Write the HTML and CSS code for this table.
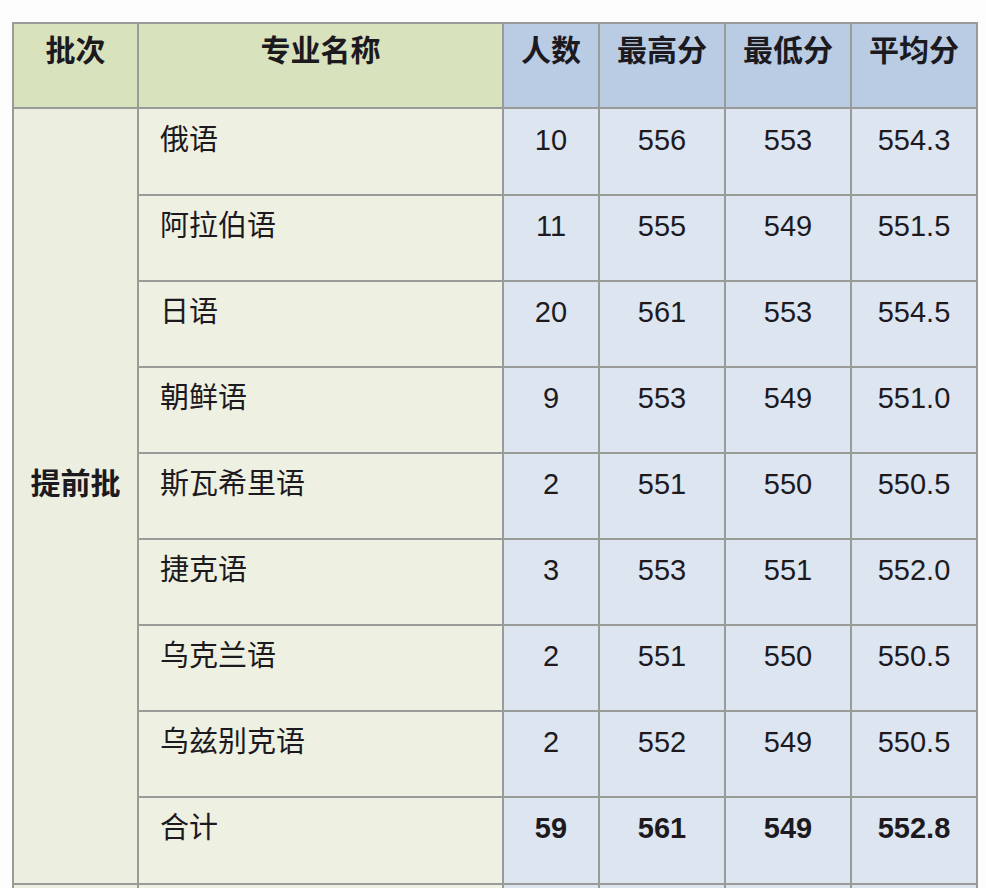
FILE: index.html
```html
<!DOCTYPE html>
<html lang="zh-CN">
<head>
<meta charset="utf-8">
<title>提前批录取分数</title>
<link rel="stylesheet" href="styles.css">
</head>
<body>
<table class="scores">
  <colgroup>
    <col class="c-batch"><col class="c-name"><col class="c-num"><col class="c-score"><col class="c-score"><col class="c-score">
  </colgroup>
  <thead>
    <tr>
      <th class="g">批次</th>
      <th class="g">专业名称</th>
      <th class="b">人数</th>
      <th class="b">最高分</th>
      <th class="b">最低分</th>
      <th class="b">平均分</th>
    </tr>
  </thead>
  <tbody>
    <tr class="first">
      <td class="batch" rowspan="9">提前批</td>
      <td class="name">俄语</td><td class="n">10</td><td class="n">556</td><td class="n">553</td><td class="n">554.3</td>
    </tr>
    <tr><td class="name">阿拉伯语</td><td class="n">11</td><td class="n">555</td><td class="n">549</td><td class="n">551.5</td></tr>
    <tr><td class="name">日语</td><td class="n">20</td><td class="n">561</td><td class="n">553</td><td class="n">554.5</td></tr>
    <tr><td class="name">朝鲜语</td><td class="n">9</td><td class="n">553</td><td class="n">549</td><td class="n">551.0</td></tr>
    <tr><td class="name">斯瓦希里语</td><td class="n">2</td><td class="n">551</td><td class="n">550</td><td class="n">550.5</td></tr>
    <tr><td class="name">捷克语</td><td class="n">3</td><td class="n">553</td><td class="n">551</td><td class="n">552.0</td></tr>
    <tr><td class="name">乌克兰语</td><td class="n">2</td><td class="n">551</td><td class="n">550</td><td class="n">550.5</td></tr>
    <tr><td class="name">乌兹别克语</td><td class="n">2</td><td class="n">552</td><td class="n">549</td><td class="n">550.5</td></tr>
    <tr class="total"><td class="name">合计</td><td class="n">59</td><td class="n">561</td><td class="n">549</td><td class="n">552.8</td></tr>
    <tr class="next"><td class="batch2"></td><td class="name"></td><td class="n"></td><td class="n"></td><td class="n"></td><td class="n"></td></tr>
  </tbody>
</table>
</body>
</html>
```

FILE: styles.css
```css
html, body {
  margin: 0;
  padding: 0;
  background: #fdfdfe;
}

body {
  padding: 22px 0 0 12px;
  font-family: "Liberation Sans", "Noto Sans CJK SC", sans-serif;
  color: #1c1a1e;
}

.scores {
  border-collapse: collapse;
  table-layout: fixed;
  width: 966px;
}

.c-batch { width: 125px; }
.c-name { width: 365px; }
.c-num { width: 96px; }
.c-score { width: 126px; }

.scores th,
.scores td {
  border: 2px solid #999b98;
  padding: 0;
  vertical-align: top;
  line-height: 34px;
}

.scores th {
  height: 85px;
  box-sizing: border-box;
  padding-top: 10px;
  font-size: 30px;
  font-weight: bold;
  text-align: center;
}

.scores th.g { background: #d8e3bd; }
.scores th.b { background: #b9cce3; }

.scores td {
  height: 86px;
  box-sizing: border-box;
  padding-top: 13px;
  font-size: 29px;
}

.scores tr.first td {
  height: 87px;
  padding-top: 14px;
}

.scores tr.total td {
  height: 87px;
}

.scores td.batch {
  background: #eceee0;
  text-align: center;
  vertical-align: middle;
  padding: 0 0 38px 0;
  font-size: 30px;
  font-weight: bold;
}

.scores td.batch2 { background: #eceee0; }

.scores td.name {
  background: #eef0e1;
  padding-left: 21px;
}

.scores td.n {
  background: #dce5f0;
  text-align: center;
}

.total td.n {
  font-weight: bold;
}
```
